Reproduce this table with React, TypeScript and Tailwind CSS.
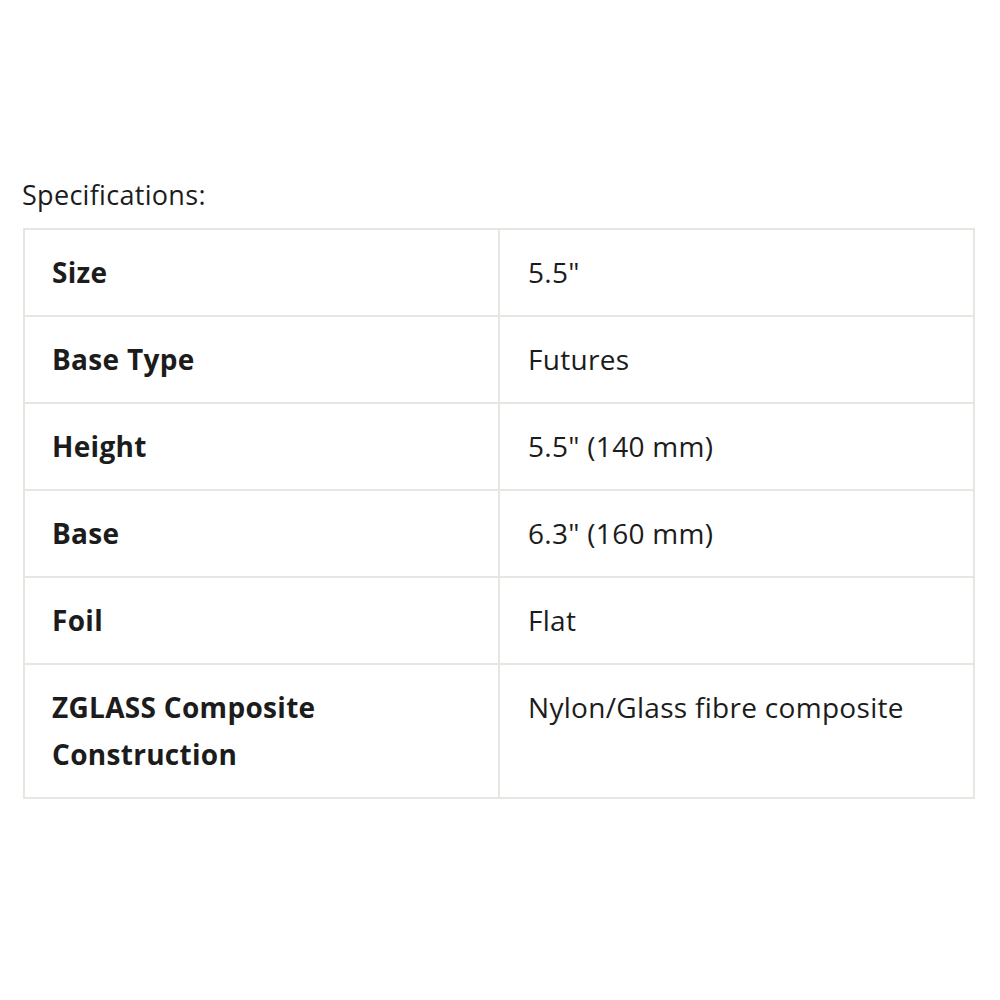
const specs: [string, string][] = [
  ["Size", '5.5"'],
  ["Base Type", "Futures"],
  ["Height", '5.5" (140 mm)'],
  ["Base", '6.3" (160 mm)'],
  ["Foil", "Flat"],
  ["ZGLASS Composite Construction", "Nylon/Glass fibre composite"],
];

export default function App() {
  return (
    <div className="w-[1000px] h-[1000px] bg-white pt-[176px] pl-[23px] font-['Open_Sans',sans-serif] text-[#1c1c1c] tracking-[0.3px]">
      <p className="text-[27px] leading-[38px] mb-[14px] -ml-[1px]">Specifications:</p>
      <table className="w-[952px] border-collapse table-fixed">
        <colgroup>
          <col className="w-[475px]" />
          <col />
        </colgroup>
        <tbody>
          {specs.map(([label, value]) => (
            <tr key={label}>
              <td className="border-2 border-[#e8e6e0] align-top px-[27px] py-[19px] text-[28px] leading-[47px] font-bold">
                {label}
              </td>
              <td className="border-2 border-[#e8e6e0] align-top px-[28px] py-[19px] text-[28px] leading-[47px]">
                {value}
              </td>
            </tr>
          ))}
        </tbody>
      </table>
    </div>
  );
}
